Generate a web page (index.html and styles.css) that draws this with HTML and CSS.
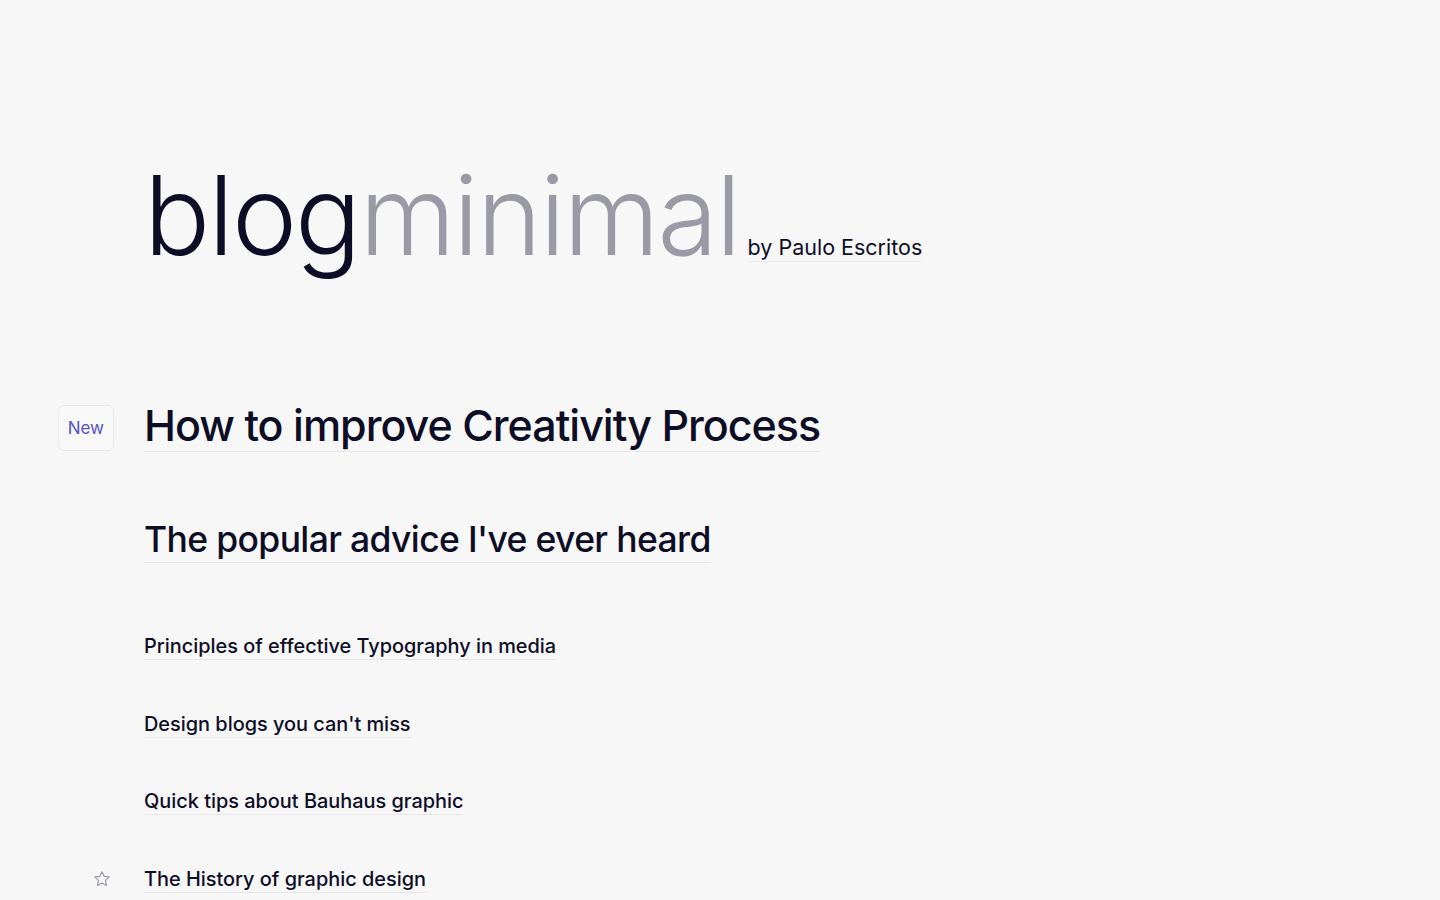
FILE: index.html
```html
<!DOCTYPE html>
<html lang="en">
<head>
<meta charset="utf-8">
<title>blog minimal</title>
<link rel="stylesheet" href="styles.css">
</head>
<body>
<div class="page">
  <header class="brand">
    <h1 class="logo"><span class="logo-a">blog</span><span class="logo-b">minimal</span></h1>
    <span class="author">by Paulo Escritos</span>
  </header>
  <main class="posts">
    <div class="post post-xl">
      <div class="marker"><span class="badge">New</span></div>
      <a class="title" href="#">How to improve Creativity Process</a>
    </div>
    <div class="post post-lg">
      <div class="marker"></div>
      <a class="title" href="#">The popular advice I've ever heard</a>
    </div>
    <div class="post post-sm first-sm">
      <div class="marker"></div>
      <a class="title" href="#">Principles of effective Typography in media</a>
    </div>
    <div class="post post-sm">
      <div class="marker"></div>
      <a class="title" href="#">Design blogs you can't miss</a>
    </div>
    <div class="post post-sm">
      <div class="marker"></div>
      <a class="title" href="#">Quick tips about Bauhaus graphic</a>
    </div>
    <div class="post post-sm">
      <div class="marker">
        <svg class="star" viewBox="0 0 24 24" width="20" height="20" fill="none" stroke="currentColor" stroke-width="1.4" stroke-linejoin="round"><path d="M12 3.2l2.6 5.6 6.1.7-4.5 4.2 1.2 6-5.4-3-5.4 3 1.2-6-4.5-4.2 6.1-.7z"/></svg>
      </div>
      <a class="title" href="#">The History of graphic design</a>
    </div>
  </main>
</div>
</body>
</html>
```
FILE: styles.css
```css
html, body {
  margin: 0;
  padding: 0;
  background: #f7f7f8;
  height: 100%;
  overflow: hidden;
}
body {
  font-family: Inter, "Noto Sans", sans-serif;
  color: #0d0d26;
}
.page {
  padding: 160px 0 0 144px;
}
.brand {
  display: flex;
  align-items: baseline;
  gap: 8px;
}
.logo {
  margin: 0;
  font-size: 110px;
  font-weight: 300;
  letter-spacing: -2px;
  line-height: 1;
}
.logo-a { color: #0d0d26; }
.logo-b { color: #9a9aa6; }
.author {
  font-size: 21.5px;
  font-weight: 400;
  color: #0d0d26;
  line-height: 28px;
  border-bottom: 1px solid #ececef;
}
.posts {
  margin-top: 129px;
  display: flex;
  flex-direction: column;
}
.post {
  display: flex;
  align-items: center;
  margin-left: -144px;
}
.marker {
  width: 144px;
  flex: none;
  display: flex;
  justify-content: flex-end;
  align-items: center;
}
.title {
  color: #0d0d26;
  text-decoration: none;
  border-bottom: 1px solid #e6e6ea;
  font-weight: 500;
}
.post-xl .title {
  font-size: 43px;
  letter-spacing: -1px;
  line-height: 52px;
}
.post-lg {
  margin-top: 66px;
}
.post-lg .title {
  font-size: 35.5px;
  letter-spacing: -0.65px;
  line-height: 44px;
}
.post-sm .title {
  font-size: 19.9px;
  line-height: 26px;
}
.post-sm { margin-top: 50.5px; }
.first-sm { margin-top: 70px; }
.badge {
  margin-right: 30px;
  margin-top: 4px;
  border: 1px solid #e8e8ec;
  border-radius: 6px;
  padding: 12px 9px;
  font-size: 17px;
  color: #5555c8;
  line-height: 20px;
  background: #f8f8f9;
}
.star {
  color: #9a9aa6;
  margin-right: 32px;
}
```
